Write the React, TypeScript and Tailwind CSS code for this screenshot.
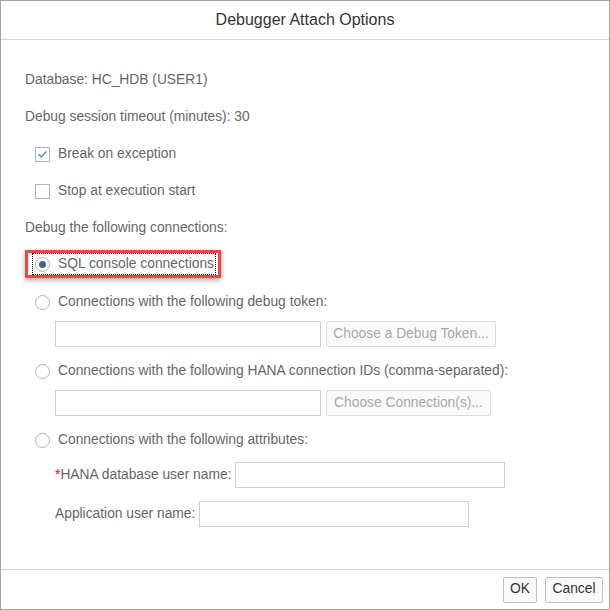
import { Check } from "lucide-react"

const FONT = { fontFamily: '"Liberation Sans", Arial, sans-serif' }

function Radio({ checked = false }: { checked?: boolean }) {
  return (
    <span className="w-[15px] h-[15px] rounded-full border border-[#b4b4b4] bg-white flex items-center justify-center shrink-0">
      {checked && <span className="w-[7px] h-[7px] rounded-full bg-[#3f6891]" />}
    </span>
  )
}

function Box({ checked = false }: { checked?: boolean }) {
  return (
    <span className="w-[15px] h-[15px] border border-[#b4b4b4] bg-white flex items-center justify-center shrink-0">
      {checked && <Check size={11} strokeWidth={2.5} className="text-[#427cac]" />}
    </span>
  )
}

function Field({ w }: { w: string }) {
  return <div className={`h-[26px] border border-[#d0d0d0] bg-white ${w}`} />
}

function DisabledButton({ label, w }: { label: string; w: string }) {
  return (
    <div
      className={`h-[26px] border border-[#dcdcdc] rounded-[2px] bg-[#fafafa] text-[#a8a8a8] text-[13.8px] flex items-center justify-center ${w}`}
    >
      {label}
    </div>
  )
}

export default function App() {
  return (
    <div
      style={FONT}
      className="w-[610px] h-[610px] bg-white border border-[#a3a3a3] flex flex-col text-[13.8px] text-[#666]"
    >
      {/* Header */}
      <div className="h-[39px] border-b border-[#d6d6d6] flex items-center justify-center text-[16px] text-[#333]">
        Debugger Attach Options
      </div>

      {/* Body */}
      <div className="flex-1 pl-[24px] pt-[31px] flex flex-col">
        <div className="h-[18px] flex items-center">Database: HC_HDB (USER1)</div>
        <div className="h-[18px] mt-[19px] flex items-center">Debug session timeout (minutes): 30</div>

        <div className="h-[18px] mt-[19px] pl-[10px] flex items-center gap-[8px]">
          <Box checked />
          <span>Break on exception</span>
        </div>
        <div className="h-[18px] mt-[19px] pl-[10px] flex items-center gap-[8px]">
          <Box />
          <span>Stop at execution start</span>
        </div>

        <div className="h-[18px] mt-[19px] flex items-center">Debug the following connections:</div>

        {/* Highlighted option */}
        <div className="mt-[13px] self-start h-[28px] border-[3px] border-[#f44545] shadow-[0_2px_5px_rgba(0,0,0,0.35)] flex items-center pl-[5px] pr-[3px]">
          <div className="h-[20px] pl-[2px] pr-[1px] outline outline-1 outline-dotted outline-black flex items-center gap-[8px] whitespace-nowrap">
            <Radio checked />
            <span>SQL console connections</span>
          </div>
        </div>

        <div className="h-[18px] mt-[15px] pl-[10px] flex items-center gap-[8px]">
          <Radio />
          <span>Connections with the following debug token:</span>
        </div>
        <div className="mt-[10px] pl-[30px] flex gap-[5px]">
          <Field w="w-[266px]" />
          <DisabledButton label="Choose a Debug Token..." w="w-[170px]" />
        </div>

        <div className="h-[18px] mt-[15px] pl-[10px] flex items-center gap-[8px]">
          <Radio />
          <span>Connections with the following HANA connection IDs (comma-separated):</span>
        </div>
        <div className="mt-[10px] pl-[30px] flex gap-[5px]">
          <Field w="w-[266px]" />
          <DisabledButton label="Choose Connection(s)..." w="w-[165px]" />
        </div>

        <div className="h-[18px] mt-[15px] pl-[10px] flex items-center gap-[8px]">
          <Radio />
          <span>Connections with the following attributes:</span>
        </div>

        <div className="mt-[13px] pl-[30px] flex items-center gap-[4px]">
          <span>
            <span className="text-[#e00]">*</span>HANA database user name:
          </span>
          <Field w="w-[270px]" />
        </div>
        <div className="mt-[13px] pl-[30px] flex items-center gap-[4px]">
          <span>Application user name:</span>
          <Field w="w-[270px]" />
        </div>
      </div>

      {/* Footer */}
      <div className="h-[40px] border-t border-[#d6d6d6] flex items-center justify-end gap-[8px] pr-[6px]">
        <div className="w-[34px] h-[26px] border border-[#bfbfbf] rounded-[2px] bg-[#fafafa] text-[#333] flex items-center justify-center">
          OK
        </div>
        <div className="w-[58px] h-[26px] border border-[#bfbfbf] rounded-[2px] bg-[#fafafa] text-[#333] flex items-center justify-center">
          Cancel
        </div>
      </div>
    </div>
  )
}
